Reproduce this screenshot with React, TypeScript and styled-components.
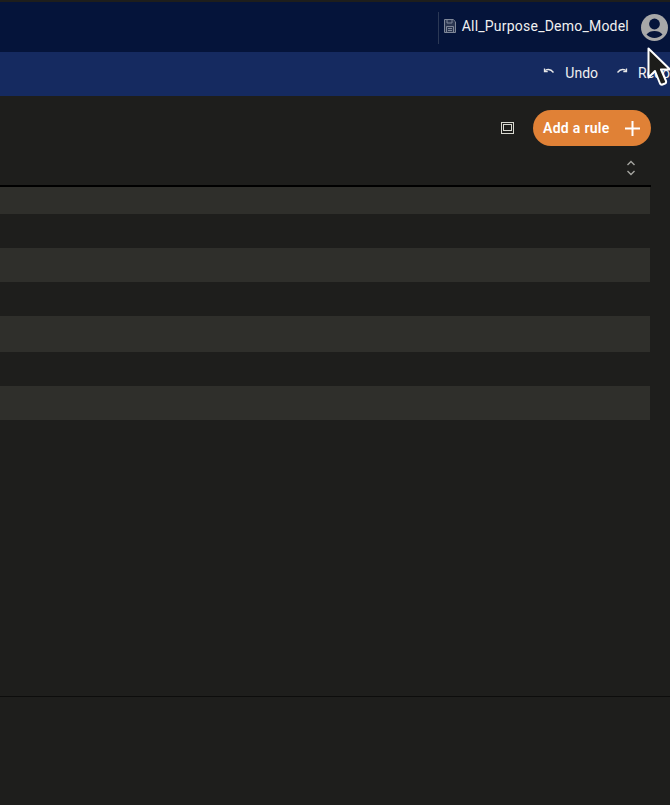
import { createGlobalStyle, styled } from "styled-components";

const GlobalStyle = createGlobalStyle`
    html, body {
        margin: 0;
        padding: 0;
        background: #1e1e1c;
        overflow: hidden;
    }
`;

const rowHeights = [27, 34, 34, 34, 36, 34, 34];

const App = () => {
    return (
        <Page>
            <GlobalStyle />
            <TopBar>
                <Divider />
                <FileName>
                    <svg width="12" height="14" viewBox="0 0 12 14" fill="none" stroke="#7f8798" strokeWidth="1">
                        <path d="M.5.5h8.7l2.3 2.3v10.700H.5z" fill="#2a3550" />
                        <path d="M3 .5v3.500h5V.5M2.500 13.500V7.500h7v6M4 9.500h4M4 11.500h4" />
                    </svg>
                    <span>All_Purpose_Demo_Model</span>
                </FileName>
                <Avatar>
                    <svg width="27" height="27" viewBox="0 0 27 27">
                        <circle cx="13.500" cy="13.500" r="13.500" fill="#a8a8a8" />
                        <circle cx="13.500" cy="10" r="5.400" fill="#05143a" />
                        <path d="M5.500 20.500c1.800-2.600 4.800-3.600 8-3.600s6.200 1 8 3.600a11 11 0 0 1-16 0z" fill="#05143a" />
                    </svg>
                </Avatar>
            </TopBar>
            <ActionBar>
                <ActionButton>
                    <svg width="12" height="10" viewBox="0 0 12 10" fill="none" stroke="#e8e8e8" strokeWidth="1.300">
                        <path d="M2 2.500c3-1.700 6-1.300 8.500 2" />
                        <path d="M1.500.5v3.200h3.200" />
                    </svg>
                    <span>Undo</span>
                </ActionButton>
                <ActionButton>
                    <svg width="12" height="10" viewBox="0 0 12 10" fill="none" stroke="#e8e8e8" strokeWidth="1.300">
                        <path d="M10 2.500c-3-1.700-6-1.300-8.500 2" />
                        <path d="M10.500.5v3.200H7.300" />
                    </svg>
                    <span>Redo</span>
                </ActionButton>
            </ActionBar>
            <Content>
                <Toolbar>
                    <FrameIcon>
                        <svg width="13" height="12" viewBox="0 0 13 12" fill="none" stroke="#d8d8d0" strokeWidth="1">
                            <rect x=".5" y=".5" width="12" height="11" />
                            <rect x="2.500" y="2.500" width="8" height="6" />
                        </svg>
                    </FrameIcon>
                    <AddButton>
                        <AddLabel>Add a rule</AddLabel>
                        <svg width="15" height="15" viewBox="0 0 15 15" stroke="#fff" strokeWidth="2">
                            <path d="M7.500 0v15M0 7.500h15" />
                        </svg>
                    </AddButton>
                </Toolbar>
                <TableHead>
                    <svg width="10" height="16" viewBox="0 0 10 16" fill="none" stroke="#a5a5a0" strokeWidth="1.400">
                        <path d="M1.500 5l3.500-3.500L8.500 5M1.500 11l3.500 3.500L8.500 11" />
                    </svg>
                </TableHead>
                <Rows>
                    {rowHeights.map((height, i) => (
                        <Row key={i} $height={height} $striped={i % 2 === 0} />
                    ))}
                </Rows>
            </Content>
            <Footer />
            <Cursor width="24" height="39" viewBox="0 0 24 39">
                <path
                    d="M1.500 1.500v29l6.500-6.500 5 12.500c.5 1 1.500 1.300 2.500 1l2.500-1c1-.5 1.300-1.500 1-2.500l-5-11.500h9z"
                    fill="#1c1c1a"
                    stroke="#fff"
                    strokeWidth="2"
                    strokeLinejoin="round"
                />
            </Cursor>
        </Page>
    );
};

const Page = styled.div`
    position: relative;
    width: 670px;
    height: 805px;
    display: flex;
    flex-direction: column;
    background: #1e1e1c;
    font-family: "Roboto", "Liberation Sans", sans-serif;
    overflow: hidden;
`;

const TopBar = styled.header`
    margin-top: 2px;
    height: 50px;
    flex: none;
    background: #05143a;
    display: flex;
    align-items: center;
    justify-content: flex-end;
    padding-right: 2px;
`;

const Divider = styled.div`
    width: 1px;
    height: 32px;
    margin: 2px 5px 0 0;
    background: #2b3855;
`;

const FileName = styled.div`
    display: flex;
    align-items: center;
    gap: 6px;
    color: #f0f0f0;
    font-size: 14px;
    letter-spacing: 0.22px;
    margin: -2px 12px 0 0;
`;

const Avatar = styled.div`
    width: 27px;
    height: 27px;
    margin-top: 1px;
`;

const ActionBar = styled.div`
    height: 44px;
    flex: none;
    background: #152a60;
    display: flex;
    align-items: center;
    justify-content: flex-end;
    gap: 18px;
`;

const ActionButton = styled.div`
    display: flex;
    align-items: center;
    gap: 10px;
    color: #f0f0f0;
    font-size: 14px;
    margin-top: -2px;
`;

const Content = styled.main`
    height: 601px;
    flex: none;
    box-sizing: border-box;
    padding-right: 20px;
    border-bottom: 1px solid #0d0d0c;
`;

const Toolbar = styled.div`
    height: 64px;
    display: flex;
    align-items: center;
    justify-content: flex-end;
    gap: 19px;
    margin-right: -1px;
`;

const FrameIcon = styled.div`
    display: flex;
`;

const AddButton = styled.button`
    width: 118px;
    height: 36px;
    border: none;
    border-radius: 18px;
    background: #e08136;
    color: #fff;
    font-family: inherit;
    font-size: 14px;
    font-weight: 600;
    letter-spacing: 0.3px;
    display: flex;
    align-items: center;
    justify-content: space-between;
    padding: 0 11px 0 10px;
`;

const AddLabel = styled.span`
    margin-top: -1px;
`;

const TableHead = styled.div`
    height: 25px;
    display: flex;
    align-items: flex-start;
    justify-content: flex-end;
    margin-right: -1px;
    padding-right: 15px;
    border-bottom: 2px solid #000;
`;

const Rows = styled.div`
    display: flex;
    flex-direction: column;
`;

const Row = styled.div<{ $height: number; $striped: boolean }>`
    height: ${({ $height }) => $height}px;
    background: ${({ $striped }) => ($striped ? "#2f2f2b" : "transparent")};
`;

const Footer = styled.footer`
    flex: 1;
    background: #1e1e1c;
`;

const Cursor = styled.svg`
    position: absolute;
    top: 47px;
    left: 647px;
`;

export default App;
